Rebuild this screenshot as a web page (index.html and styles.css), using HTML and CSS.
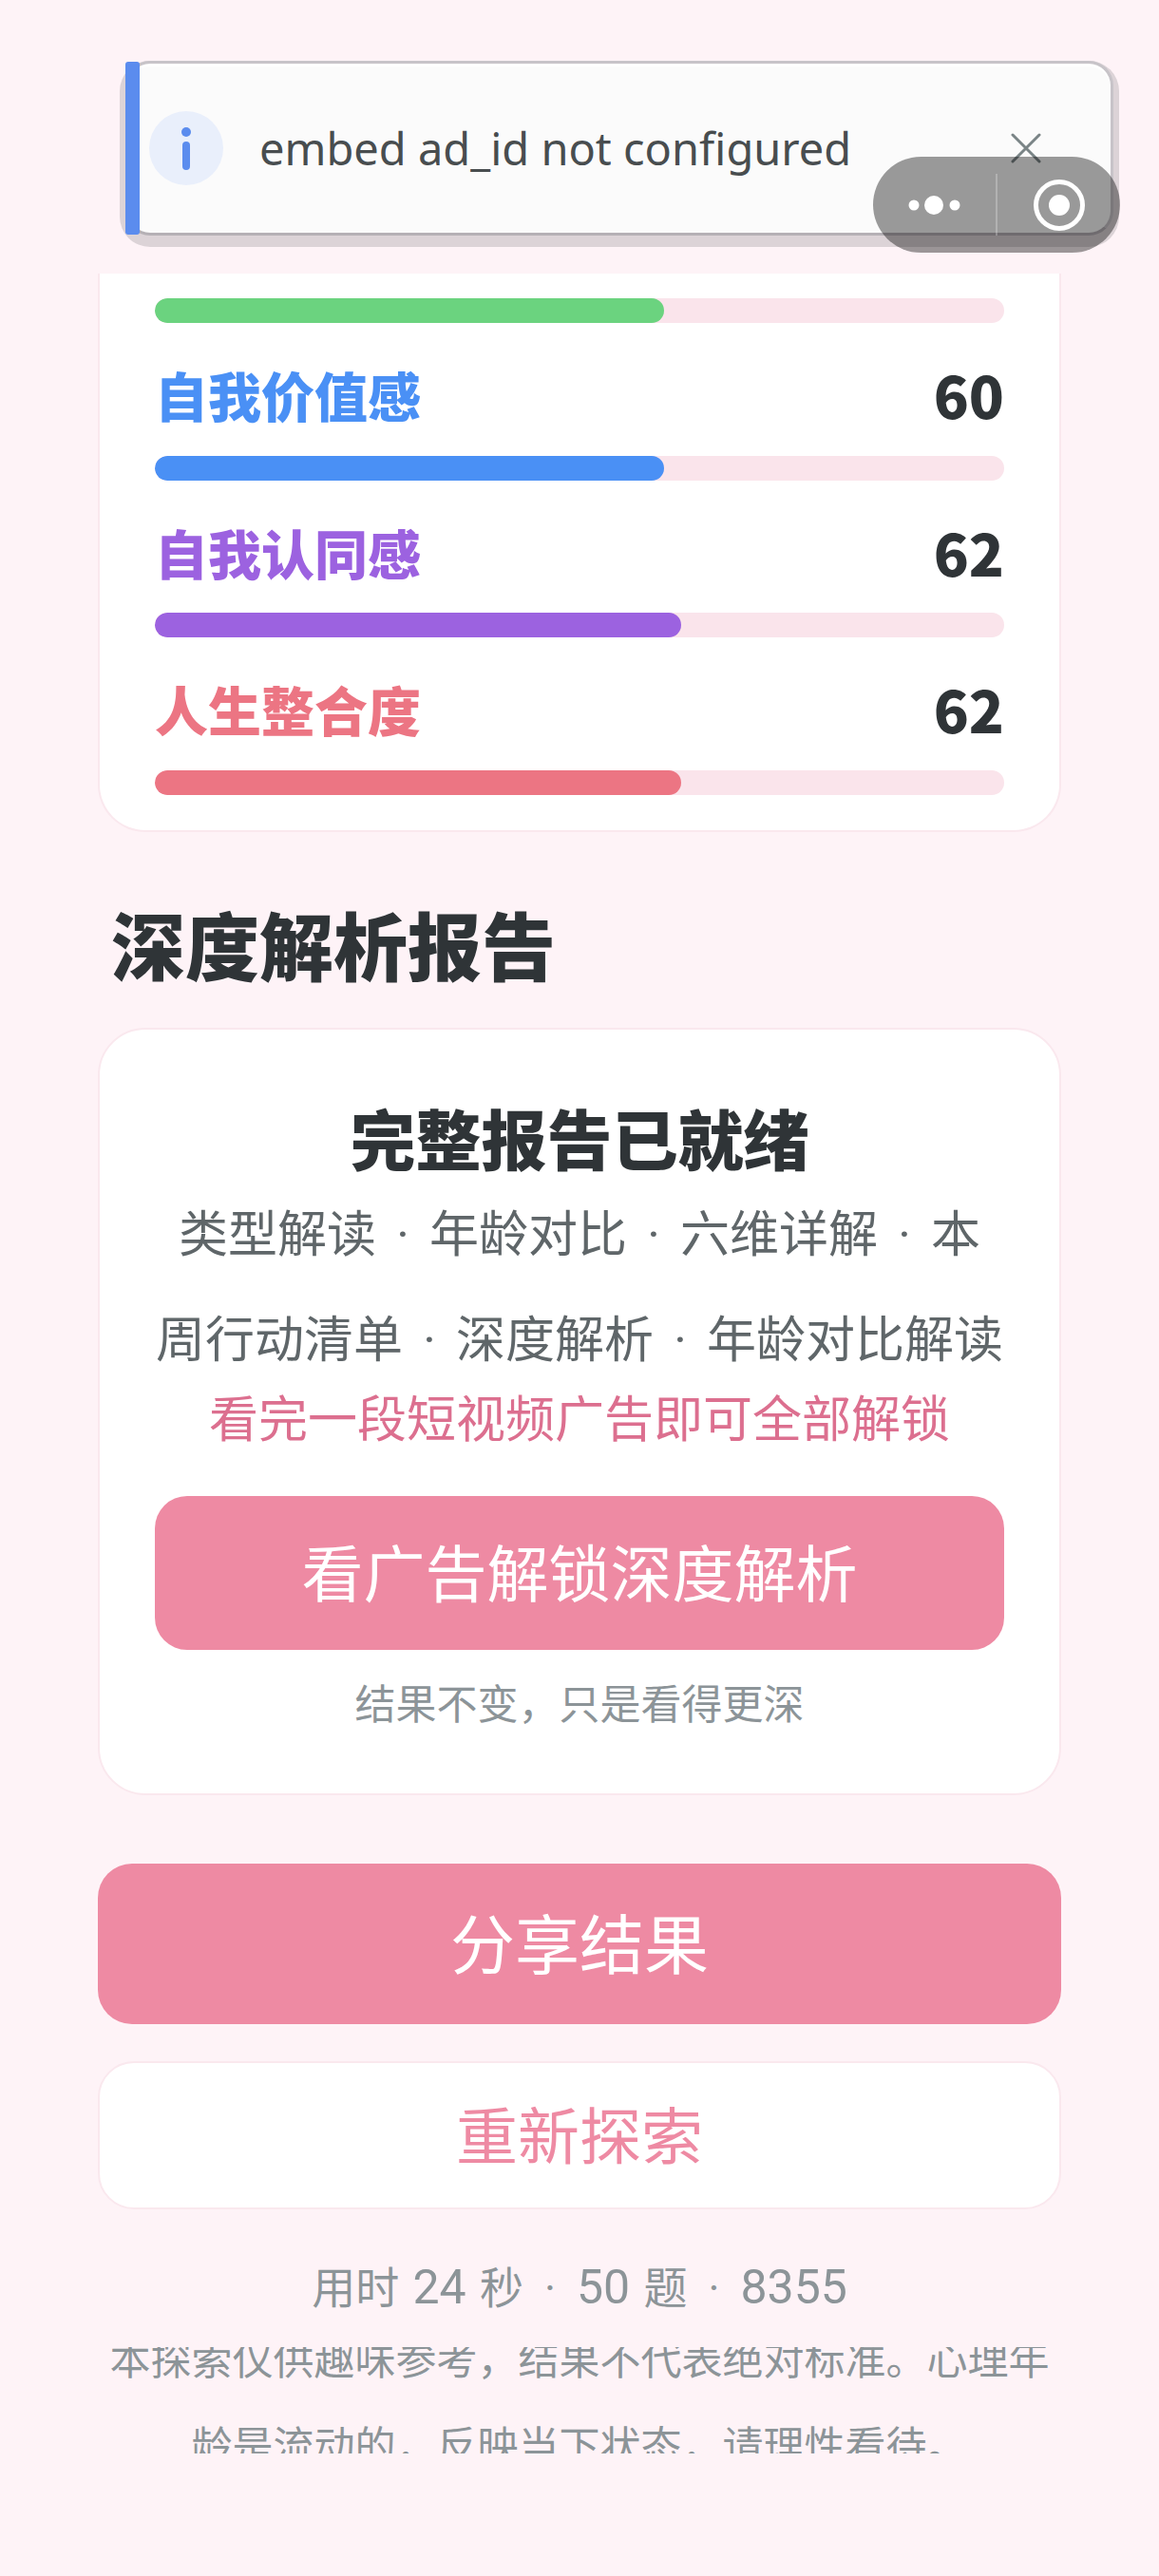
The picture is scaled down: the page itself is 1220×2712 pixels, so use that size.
FILE: index.html
```html
<!DOCTYPE html>
<html lang="zh-CN">
<head>
    <meta charset="UTF-8">
    <meta name="viewport" content="width=device-width, initial-scale=1.0">
    <title>深度解析报告</title>
    <link rel="stylesheet" href="styles.css">
</head>
<body>
  <!-- 顶部提示条 -->
  <div class="notice">
    <svg class="notice-icon" viewBox="0 0 78 78">
      <circle cx="39" cy="39" r="39" fill="#e9effb"/>
      <circle cx="39" cy="22" r="5" fill="#5b8cee"/>
      <path d="M39 36V58" stroke="#5b8cee" stroke-width="8" stroke-linecap="round"/>
    </svg>
    <span class="notice-text">embed ad_id not configured</span>
    <svg class="notice-close" viewBox="0 0 32 32">
      <path d="M2 2L30 30M30 2L2 30" stroke="#7a8486" stroke-width="3" stroke-linecap="round"/>
    </svg>
  </div>

  <!-- 小程序胶囊按钮 -->
  <div class="capsule">
    <svg class="capsule-more" viewBox="0 0 56 22">
      <circle cx="6" cy="11" r="5.5" fill="#fff"/>
      <circle cx="27" cy="11" r="10" fill="#fff"/>
      <circle cx="49" cy="11" r="5.5" fill="#fff"/>
    </svg>
    <span class="capsule-line"></span>
    <svg class="capsule-target" viewBox="0 0 56 56">
      <circle cx="28" cy="28" r="24.5" fill="none" stroke="#fff" stroke-width="5"/>
      <circle cx="28" cy="28" r="11" fill="#fff"/>
    </svg>
  </div>

  <main class="page">
    <!-- 维度得分 -->
    <section class="score-card">
      <div class="bar"><div class="bar-fill fill-green" style="width:60%"></div></div>

      <div class="score-head"><span class="score-name text-blue">自我价值感</span><span class="score-num">60</span></div>
      <div class="bar"><div class="bar-fill fill-blue" style="width:60%"></div></div>

      <div class="score-head"><span class="score-name text-purple">自我认同感</span><span class="score-num">62</span></div>
      <div class="bar"><div class="bar-fill fill-purple" style="width:62%"></div></div>

      <div class="score-head"><span class="score-name text-red">人生整合度</span><span class="score-num">62</span></div>
      <div class="bar"><div class="bar-fill fill-red" style="width:62%"></div></div>
    </section>

    <h2 class="section-title">深度解析报告</h2>

    <section class="report-card">
      <h3 class="report-title">完整报告已就绪</h3>
      <p class="report-desc">类型解读<span class="sep">·</span>年龄对比<span class="sep">·</span>六维详解<span class="sep">·</span>本<br>周行动清单<span class="sep">·</span>深度解析<span class="sep">·</span>年龄对比解读</p>
      <p class="report-hint">看完一段短视频广告即可全部解锁</p>
      <button class="btn-unlock">看广告解锁深度解析</button>
      <p class="report-note">结果不变，只是看得更深</p>
    </section>

    <button class="btn-share">分享结果</button>
    <button class="btn-retry">重新探索</button>

    <p class="stats">用时 <span class="stat-num">24</span> 秒<span class="sep">·</span><span class="stat-num">50</span> 题<span class="sep">·</span><span class="stat-num">8355</span></p>
    <div class="disclaimer">
      <p class="disclaimer-text">本探索仅供趣味参考，结果不代表绝对标准。心理年龄是流动的，反映当下状态，请理性看待。</p>
    </div>
  </main>
</body>
</html>
```

FILE: styles.css
```css
* {
    box-sizing: border-box;
    margin: 0;
    padding: 0;
}

html, body {
    height: 2712px;
    overflow: hidden;
}

body {
    font-family: "Noto Sans CJK SC", "Noto Sans", sans-serif;
    background-color: #fef3f7;
    color: #2f3437;
    position: relative;
}

button {
    display: flex;
    align-items: center;
    justify-content: center;
    width: 100%;
    padding-bottom: 7px;
    font-family: inherit;
    border: none;
    cursor: pointer;
}

.sep {
    display: inline-block;
    width: 56px;
    font-family: Roboto, sans-serif;
    line-height: 1;
    text-align: center;
}

/* 提示条 */
.notice {
    position: absolute;
    left: 132px;
    top: 64px;
    width: 1040px;
    height: 184px;
    display: flex;
    align-items: center;
    padding-left: 22px;
    background-color: #fbfbfb;
    border: 3px solid #c7c3c8;
    border-bottom-color: #b5b0b5;
    border-radius: 26px;
    box-shadow: inset 0 3px 0 #fff, 0 6px 0 6px #dcd3d7;
}

.notice::before {
    content: "";
    position: absolute;
    left: -3px;
    top: -2px;
    width: 15px;
    height: 182px;
    background-color: #5b8cee;
    border-radius: 3px;
}

.notice-icon {
    width: 78px;
    height: 78px;
    flex-shrink: 0;
}

.notice-text {
    margin-left: 38px;
    font-family: "Noto Sans", sans-serif;
    font-size: 47px;
    color: #484d4f;
}

.notice-close {
    width: 32px;
    height: 32px;
    margin-left: auto;
    margin-right: 73px;
}

/* 胶囊 */
.capsule {
    position: absolute;
    left: 919px;
    top: 165px;
    width: 260px;
    height: 101px;
    display: flex;
    align-items: center;
    background-color: rgba(0, 0, 0, 0.39);
    border-radius: 51px;
}

.capsule-more {
    width: 56px;
    height: 22px;
    margin-left: 37px;
}

.capsule-line {
    width: 2px;
    height: 65px;
    margin-left: 36px;
    background-color: rgba(255, 255, 255, 0.25);
}

.capsule-target {
    width: 56px;
    height: 56px;
    margin-left: 37px;
}

/* 内容 */
.page {
    padding: 288px 103px 0;
}

.score-card {
    padding: 26px 58px 37px;
    background-color: #fff;
    border: 2px solid #fae8ee;
    border-top: none;
    border-radius: 0 0 50px 50px;
}

.bar {
    height: 26px;
    background-color: #fae4eb;
    border-radius: 13px;
    overflow: hidden;
}

.bar-fill {
    height: 100%;
    border-radius: 13px;
}

.fill-green { background-color: #6bd37f; }
.fill-blue { background-color: #4a90f5; }
.fill-purple { background-color: #9c62e0; }
.fill-red { background-color: #ec7583; }

.score-head {
    display: flex;
    justify-content: space-between;
    align-items: center;
    height: 80px;
    margin-top: 35px;
    margin-bottom: 24.7px;
}

.score-name {
    font-size: 56px;
    font-weight: 900;
    line-height: 80px;
}

.score-num {
    font-size: 61px;
    font-weight: 900;
    line-height: 80px;
}

.text-blue { color: #4a90f5; }
.text-purple { color: #9c62e0; }
.text-red { color: #ec7583; }

.section-title {
    margin-top: 67px;
    margin-bottom: 39px;
    padding-left: 14px;
    font-size: 78px;
    font-weight: 900;
    line-height: 100px;
}

.report-card {
    padding: 71px 58px 67px;
    text-align: center;
    background-color: #fff;
    border: 2px solid #fae8ee;
    border-radius: 50px;
}

.report-title {
    font-size: 69px;
    font-weight: 900;
    line-height: 85px;
}

.report-desc {
    font-size: 52px;
    line-height: 111px;
    color: #5f6669;
    white-space: nowrap;
}

.report-hint {
    font-size: 52px;
    line-height: 57px;
    color: #dc6f8f;
}

.btn-unlock {
    height: 162px;
    margin-top: 56px;
    font-size: 65px;
    color: #fff;
    background-color: #ee8aa3;
    border-radius: 34px;
}

.report-note {
    margin-top: 24px;
    font-size: 43px;
    line-height: 60px;
    color: #8c9498;
}

.btn-share {
    height: 169px;
    margin-top: 72px;
    font-size: 68px;
    color: #fff;
    background-color: #ee8aa3;
    border-radius: 36px;
}

.btn-retry {
    height: 156px;
    margin-top: 39px;
    font-size: 65px;
    color: #ee8aa3;
    background-color: #fff;
    border: 2px solid #fae8ee;
    border-radius: 38px;
}

.stats {
    margin-top: 49px;
    font-size: 46px;
    line-height: 60px;
    text-align: center;
    color: #8c9498;
    word-spacing: 4px;
    white-space: nowrap;
}

.stat-num {
    font-family: Roboto, sans-serif;
    font-size: 50px;
    line-height: 1;
}

.disclaimer {
    height: 112px;
    margin-top: 36px;
    overflow: hidden;
}

.disclaimer-text {
    margin-top: -35px;
    font-size: 43px;
    line-height: 91px;
    text-align: center;
    color: #8c9498;
}
```
